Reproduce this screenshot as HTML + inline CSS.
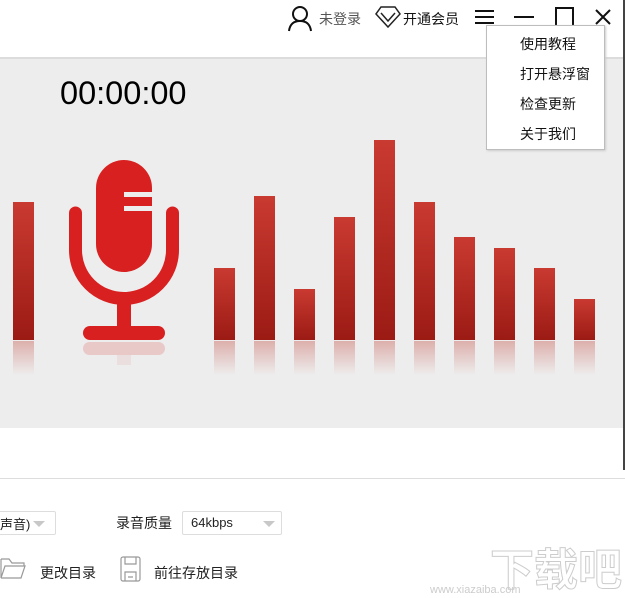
<!DOCTYPE html>
<html><head><meta charset="utf-8"><style>
*{margin:0;padding:0;box-sizing:border-box}
body{width:625px;height:598px;overflow:hidden;background:#fff;position:relative;font-family:"Liberation Sans","Noto Sans CJK SC",sans-serif;font-size:13px;color:#222}
.a{position:absolute}
.gray{left:0;top:58px;width:625px;height:370px;background:#ededed;border-top:1px solid #dcdcdc}
.bar{position:absolute;width:21px;bottom:258px;background:linear-gradient(#c93a31,#9b1b14)}
.ref{position:absolute;width:21px;top:341px;height:34px;background:linear-gradient(rgba(190,60,50,.35),rgba(237,237,237,0))}
.menu{left:486px;top:25px;width:119px;height:125px;background:#fff;border:1px solid #bdbdbd;box-shadow:1px 1px 2px #ccc}
.menu div{position:absolute;left:33px;font-size:14px;color:#111}
.sel{border:1px solid #ddd;height:24px;background:#fff;border-radius:2px}
.tri{width:0;height:0;border-left:6px solid transparent;border-right:6px solid transparent;border-top:6px solid #c8c8c8;position:absolute}
</style></head><body>
<div class="a" style="left:0;top:57px;width:625px;height:1px;background:#dcdcdc"></div>
<div class="a gray"></div>
<div class="a" style="left:0;top:478px;width:625px;height:1px;background:#ddd"></div>
<div class="a" style="left:623px;top:0;width:2px;height:470px;background:#444"></div>

<svg class="a" style="left:286px;top:4px" width="28" height="28" viewBox="0 0 28 28"><circle cx="14" cy="10" r="7" fill="none" stroke="#111" stroke-width="2"/><path d="M3 27 C4 19 9 17 14 17 C19 17 24 19 25 27" fill="none" stroke="#111" stroke-width="2"/></svg>
<div class="a" style="left:319px;top:9px;font-size:14px;color:#555">未登录</div>
<svg class="a" style="left:375px;top:6px" width="26" height="22" viewBox="0 0 26 22"><path d="M6 1 H20 L25 8 L13 21 L1 8 Z" fill="none" stroke="#222" stroke-width="1.5"/><path d="M6 7 L13 15 L20 7" fill="none" stroke="#222" stroke-width="1.5"/></svg>
<div class="a" style="left:403px;top:9px;font-size:14px;color:#111">开通会员</div>
<div class="a" style="left:475px;top:10px;width:19px;height:2px;background:#111"></div>
<div class="a" style="left:475px;top:16px;width:19px;height:2px;background:#111"></div>
<div class="a" style="left:475px;top:22px;width:19px;height:2px;background:#111"></div>
<div class="a" style="left:514px;top:16px;width:20px;height:2px;background:#111"></div>
<div class="a" style="left:555px;top:7px;width:19px;height:20px;border:2px solid #111"></div>
<svg class="a" style="left:594px;top:8px" width="18" height="18"><path d="M2 2 L16 16 M16 2 L2 16" stroke="#111" stroke-width="2"/></svg>

<div class="a" style="left:60px;top:75px;font-size:32.5px;color:#000">00:00:00</div>

<div class="bar" style="left:13px;height:138px"></div><div class="ref" style="left:13px"></div>
<div class="bar" style="left:214px;height:72px"></div><div class="ref" style="left:214px"></div>
<div class="bar" style="left:254px;height:144px"></div><div class="ref" style="left:254px"></div>
<div class="bar" style="left:294px;height:51px"></div><div class="ref" style="left:294px"></div>
<div class="bar" style="left:334px;height:123px"></div><div class="ref" style="left:334px"></div>
<div class="bar" style="left:374px;height:200px"></div><div class="ref" style="left:374px"></div>
<div class="bar" style="left:414px;height:138px"></div><div class="ref" style="left:414px"></div>
<div class="bar" style="left:454px;height:103px"></div><div class="ref" style="left:454px"></div>
<div class="bar" style="left:494px;height:92px"></div><div class="ref" style="left:494px"></div>
<div class="bar" style="left:534px;height:72px"></div><div class="ref" style="left:534px"></div>
<div class="bar" style="left:574px;height:41px"></div><div class="ref" style="left:574px"></div>

<svg class="a" style="left:60px;top:150px" width="130" height="215" viewBox="60 150 130 215">
<rect x="96" y="160" width="56" height="112" rx="28" fill="#d92020"/>
<rect x="124" y="192" width="28" height="5" fill="#ededed"/>
<rect x="124" y="206" width="28" height="5" fill="#ededed"/>
<path d="M75.5 213 V250 A48.5 48.5 0 0 0 172.5 250 V213" fill="none" stroke="#d92020" stroke-width="13" stroke-linecap="round"/>
<rect x="117" y="296" width="14" height="32" fill="#d92020"/>
<rect x="83" y="326" width="82" height="14" rx="7" fill="#d92020"/>
<rect x="83" y="342" width="82" height="13" rx="6.5" fill="#d92020" opacity=".18"/>
<rect x="117" y="355" width="14" height="10" fill="#d92020" opacity=".07"/>
</svg>

<div class="a menu">
<div style="top:8px">使用教程</div>
<div style="top:38px">打开悬浮窗</div>
<div style="top:68px">检查更新</div>
<div style="top:98px">关于我们</div>
</div>

<div class="a sel" style="left:-2px;top:511px;width:58px"></div>
<div class="a" style="left:0;top:514px;font-size:13px">声音)</div>
<div class="a tri" style="left:33px;top:521px"></div>
<div class="a" style="left:116px;top:513px;font-size:14px">录音质量</div>
<div class="a sel" style="left:182px;top:511px;width:100px"></div>
<div class="a" style="left:191px;top:515px;font-size:13px">64kbps</div>
<div class="a tri" style="left:263px;top:521px"></div>
<svg class="a" style="left:0;top:556px" width="26" height="24"><path d="M1 3 H9 L12 7 H24 V10 M1 3 V22 L5 10 H25 L21 22 H1" fill="none" stroke="#999" stroke-width="1.2"/></svg>
<div class="a" style="left:40px;top:563px;font-size:14px">更改目录</div>
<svg class="a" style="left:120px;top:556px" width="22" height="26"><rect x="1" y="1" width="19" height="24" rx="2" fill="none" stroke="#999" stroke-width="1.2"/><path d="M5 1 V8 H16 V1 M5 25 V16 H16 V25 M8 21 H13" fill="none" stroke="#999" stroke-width="1.2"/></svg>
<div class="a" style="left:154px;top:563px;font-size:14px">前往存放目录</div>
<div class="a" style="left:490px;top:534px;font-size:44px;font-weight:bold;color:#fff;-webkit-text-stroke:1px #ccc;font-family:'Noto Sans CJK SC',sans-serif">下载吧</div>
<div class="a" style="left:430px;top:584px;font-size:11px;color:#ccc">www.xiazaiba.com</div>
</body></html>
